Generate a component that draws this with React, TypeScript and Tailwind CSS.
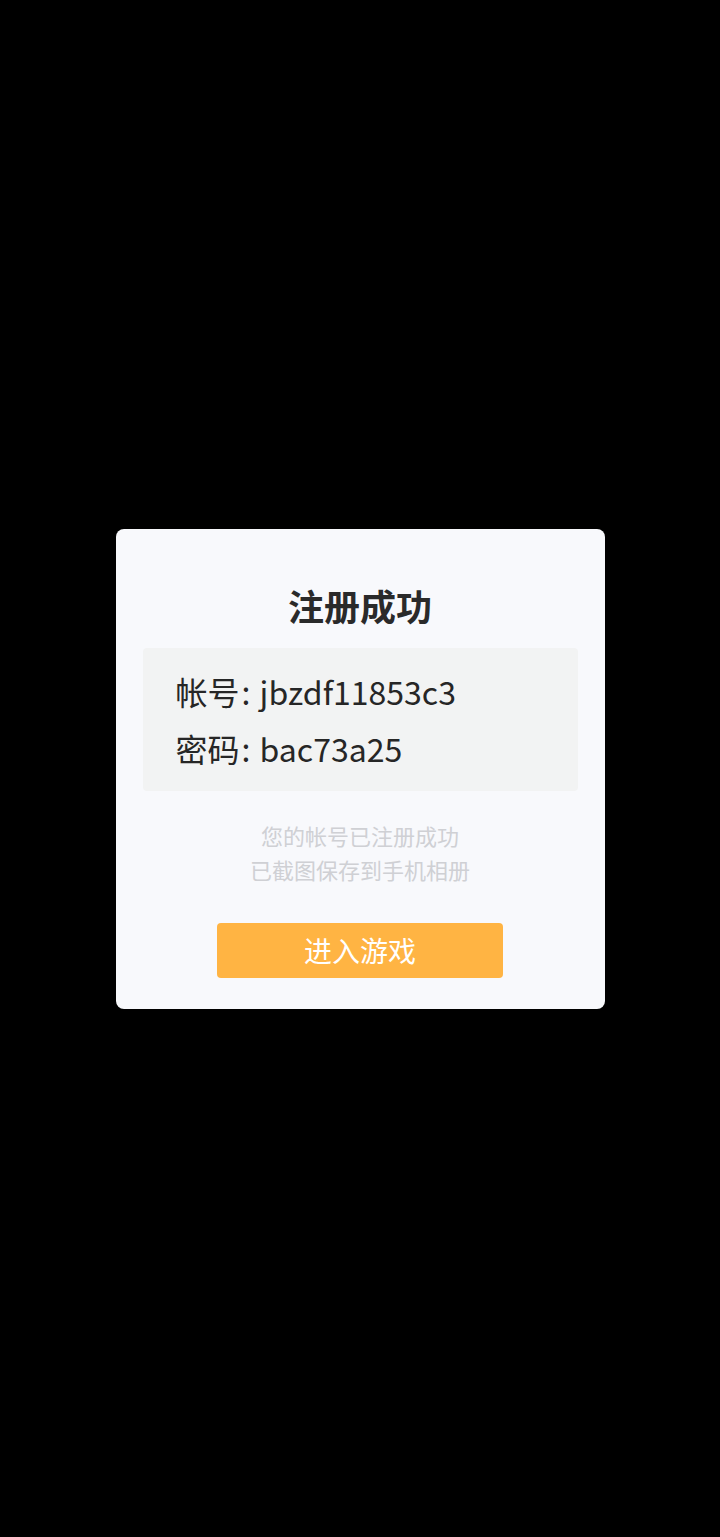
export default function App() {
  return (
    <div className="min-h-[1537px] w-full bg-black flex items-center justify-center font-['Noto_Sans_CJK_SC','Noto_Sans',sans-serif]">
      {/* Dialog card */}
      <div className="w-[489px] h-[480px] bg-[#f8f9fc] rounded-[8px] px-[27px] pt-[54px] flex flex-col items-center">
        <h1 className="text-[36px] leading-[44px] font-bold text-[#2a2a2a]">注册成功</h1>

        <div className="w-full mt-[21px] bg-[#f2f3f3] rounded-[4px] pl-[33px] pt-[15px] pb-[14px] text-[32px] leading-[57px] text-[#262626]">
          <p>帐号<span className="ml-[2px]">:</span> <span className="ml-[2px]">jbzdf11853c3</span></p>
          <p>密码<span className="ml-[2px]">:</span> <span className="ml-[2px]">bac73a25</span></p>
        </div>

        <div className="mt-[27px] text-center text-[22px] leading-[34px] text-[#cfd0d4]">
          <p>您的帐号已注册成功</p>
          <p>已截图保存到手机相册</p>
        </div>

        <button className="mt-[37px] w-[286px] h-[55px] rounded-[4px] bg-[#ffb443] text-white text-[28px] leading-none">
          进入游戏
        </button>
      </div>
    </div>
  )
}
